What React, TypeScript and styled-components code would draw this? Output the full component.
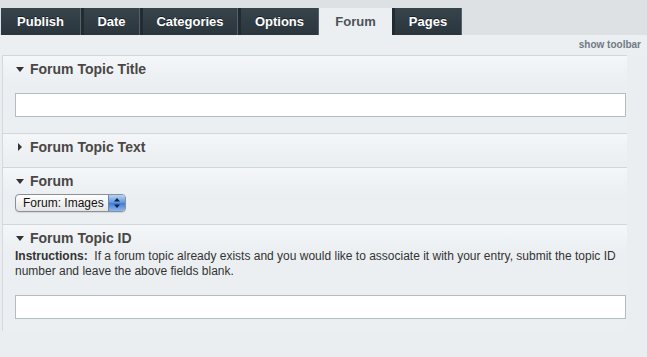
import React from "react";
import styled, { createGlobalStyle } from "styled-components";

const GlobalStyle = createGlobalStyle`
  html, body { margin: 0; padding: 0; }
  body {
    background: #eaeef1;
    font-family: "Liberation Sans", Arial, Helvetica, sans-serif;
  }
`;

const Page = styled.div`
  width: 647px;
  height: 357px;
  background: #eaeef1;
  overflow: hidden;
`;

const TabBar = styled.div`
  height: 35px;
  box-sizing: border-box;
  padding: 8px 0 0 1px;
  background: #dde1e3;
  display: flex;
`;

const Tab = styled.div<{ $w: number; $active?: boolean; $first?: boolean }>`
  width: ${(p) => p.$w}px;
  height: 27px;
  box-sizing: border-box;
  display: flex;
  align-items: center;
  justify-content: center;
  font-size: 13px;
  font-weight: bold;
  color: ${(p) => (p.$active ? "#4b5258" : "#ffffff")};
  background: ${(p) =>
    p.$active ? "#ebeff2" : "linear-gradient(#37444c, #2a353c)"};
  border-left: ${(p) => (p.$first || p.$active ? "0" : "3px solid #222b30")};
  border-right: ${(p) => (p.$active ? "0" : "1px solid #56626a")};
  text-shadow: ${(p) => (p.$active ? "none" : "0 -1px 0 rgba(0,0,0,0.5)")};
`;

const ToolbarRow = styled.div`
  height: 20px;
  line-height: 20px;
  text-align: right;
  padding-right: 6px;
  font-size: 10px;
  font-weight: bold;
  color: #6f7a84;
  background: #ebeff2;
`;

const Main = styled.div`
  display: flex;
`;

const Panel = styled.div`
  width: 624px;
  margin-left: 2px;
  border-left: 1px solid #d3d9de;
`;

const Section = styled.div<{ $pb: number }>`
  border-top: 1px solid #cfd6dc;
  background: linear-gradient(#f4f6f8, #ebeff2 28px);
  padding: 0 1px ${(p) => p.$pb}px 12px;
`;

const Header = styled.div`
  display: flex;
  align-items: center;
  padding-top: 5px;
  height: 16px;
  line-height: 16px;
  font-size: 14px;
  font-weight: bold;
  color: #4a4745;
`;

const Arrow = styled.span`
  width: 15px;
  display: flex;
  align-items: center;
`;

const TextInput = styled.div<{ $mt: number }>`
  margin-top: ${(p) => p.$mt}px;
  height: 24px;
  box-sizing: border-box;
  border: 1px solid #b3bcc1;
  background: #ffffff;
`;

const Select = styled.div`
  margin-top: 5px;
  width: 111px;
  height: 18px;
  box-sizing: border-box;
  border: 1px solid #8b8f96;
  border-radius: 4px;
  background: linear-gradient(#ffffff, #f1f1f1 50%, #e4e4e4);
  display: flex;
  align-items: center;
  overflow: hidden;
  box-shadow: 0 1px 1px rgba(0, 0, 0, 0.1);
`;

const SelectLabel = styled.span`
  flex: 1;
  padding-left: 7px;
  font-size: 12px;
  color: #111;
  white-space: nowrap;
`;

const Stepper = styled.span`
  width: 16px;
  height: 100%;
  background: linear-gradient(#b9d4f5, #5b93e0 50%, #3d7ad4 51%, #8db7ef);
  border-left: 1px solid #6e86a8;
  display: flex;
  align-items: center;
  justify-content: center;
`;

const Instructions = styled.div`
  margin-top: 3px;
  font-size: 12px;
  line-height: 15px;
  color: #333;
  white-space: nowrap;
  b { font-weight: bold; }
`;

const Down = () => (
  <svg width="8" height="5" viewBox="0 0 8 5" style={{ marginLeft: 1 }}>
    <polygon points="0,0 8,0 4,5" fill="#333" />
  </svg>
);

const Right = () => (
  <svg width="4" height="8" viewBox="0 0 4 8" style={{ marginLeft: 3 }}>
    <polygon points="0,0 4,4 0,8" fill="#333" />
  </svg>
);

const tabs = [
  { label: "Publish", w: 80 },
  { label: "Date", w: 59 },
  { label: "Categories", w: 98 },
  { label: "Options", w: 81 },
  { label: "Forum", w: 73, active: true },
  { label: "Pages", w: 70 },
];

export default function App() {
  return (
    <>
      <GlobalStyle />
      <Page>
        <TabBar>
          {tabs.map((t, i) => (
            <Tab key={t.label} $w={t.w} $active={t.active} $first={i === 0}>
              {t.label}
            </Tab>
          ))}
        </TabBar>
        <ToolbarRow>show toolbar</ToolbarRow>
        <Main>
          <Panel>
            <Section $pb={16}>
              <Header>
                <Arrow><Down /></Arrow>
                Forum Topic Title
              </Header>
              <TextInput $mt={16} />
            </Section>
            <Section $pb={12}>
              <Header>
                <Arrow><Right /></Arrow>
                Forum Topic Text
              </Header>
            </Section>
            <Section $pb={12}>
              <Header>
                <Arrow><Down /></Arrow>
                Forum
              </Header>
              <Select>
                <SelectLabel>Forum: Images</SelectLabel>
                <Stepper>
                  <svg width="6" height="10" viewBox="0 0 6 10">
                    <polygon points="3,0 6,3.5 0,3.5" fill="#10233f" />
                    <polygon points="0,6.5 6,6.5 3,10" fill="#10233f" />
                  </svg>
                </Stepper>
              </Select>
            </Section>
            <Section $pb={12}>
              <Header>
                <Arrow><Down /></Arrow>
                Forum Topic ID
              </Header>
              <Instructions>
                <b>Instructions:</b>&nbsp; If a forum topic already exists and you would like to associate it with your entry, submit the topic ID
                <br />
                number and leave the above fields blank.
              </Instructions>
              <TextInput $mt={16} />
            </Section>
          </Panel>
        </Main>
      </Page>
    </>
  );
}
